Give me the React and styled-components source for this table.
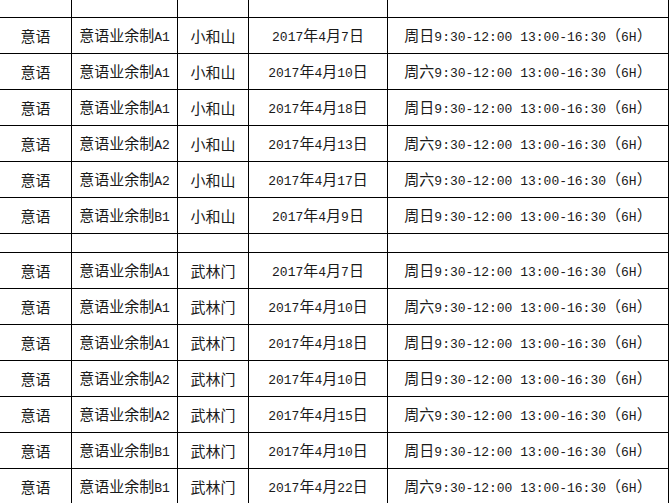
import React from 'react';
import styled, { createGlobalStyle } from 'styled-components';

const GlobalStyle = createGlobalStyle`
  html, body {
    margin: 0;
    padding: 0;
    background: #ffffff;
    overflow: hidden;
  }
`;

const TIME = '9:30-12:00 13:00-16:30（6H）';

const groups = [
  {
    campus: '小和山',
    rows: [
      ['A1', '2017年4月7日', '周日'],
      ['A1', '2017年4月10日', '周六'],
      ['A1', '2017年4月18日', '周日'],
      ['A2', '2017年4月13日', '周六'],
      ['A2', '2017年4月17日', '周六'],
      ['B1', '2017年4月9日', '周日'],
    ],
  },
  {
    campus: '武林门',
    rows: [
      ['A1', '2017年4月7日', '周日'],
      ['A1', '2017年4月10日', '周六'],
      ['A1', '2017年4月18日', '周日'],
      ['A2', '2017年4月10日', '周日'],
      ['A2', '2017年4月15日', '周六'],
      ['B1', '2017年4月10日', '周日'],
      ['B1', '2017年4月22日', '周六'],
    ],
  },
];

// split ascii runs out so they get the narrow monospace face, like SimSun's half-width glyphs
const mixed = (text) => (
  <Label>
    {text.split(/([\x20-\x7e]+)/).map((part, i) =>
      i % 2 ? <Latin key={i}>{part}</Latin> : part
    )}
  </Label>
);

const App = () => {
  const blank = (h, key) =>
    [0, 1, 2, 3, 4].map((c) => <Cell key={`${key}-${c}`} $h={h} />);

  return (
    <>
      <GlobalStyle />
      <Sheet>
        {blank(17, 'top')}
        {groups.map((g, gi) => (
          <React.Fragment key={g.campus}>
            {gi > 0 && blank(18, `gap${gi}`)}
            {g.rows.map(([level, date, day], ri) => (
              <React.Fragment key={ri}>
                <Cell>{mixed('意语')}</Cell>
                <Cell>{mixed(`意语业余制${level}`)}</Cell>
                <Cell>{mixed(g.campus)}</Cell>
                <Cell>{mixed(date)}</Cell>
                <Cell>{mixed(day + TIME)}</Cell>
              </React.Fragment>
            ))}
          </React.Fragment>
        ))}
      </Sheet>
    </>
  );
};

const Sheet = styled.div`
  display: inline-grid;
  grid-template-columns: 71px 105px 70px 138px 280px;
  gap: 1px;
  background: #000000;
  border-right: 1px solid #000000;
  vertical-align: top;
`;

const Cell = styled.div`
  height: ${(p) => p.$h || 35}px;
  background: #ffffff;
  display: flex;
  align-items: center;
  justify-content: center;
  white-space: nowrap;
  color: #1a1a1a;
  font-family: "Noto Sans CJK SC", "Liberation Sans", sans-serif;
  font-size: 15px;
`;

const Label = styled.span`
  line-height: 18px;
  padding-top: 1px;
`;

const Latin = styled.span`
  font-family: "Liberation Mono", monospace;
  font-size: 13px;
`;

export default App;
